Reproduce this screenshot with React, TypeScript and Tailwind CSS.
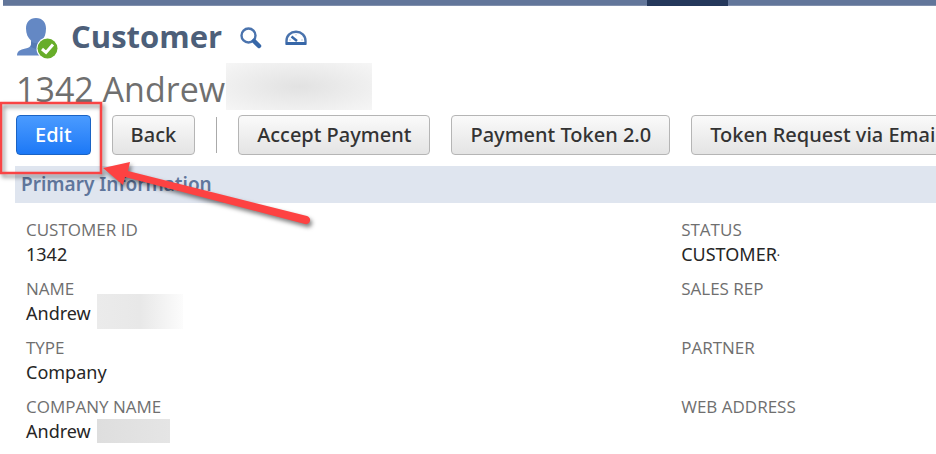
import React from 'react';
import clsx from 'clsx';

interface Field {
  label: string;
  value?: string;
  note?: string;
  mask?: string;
}

const LEFT_FIELDS: Field[] = [
  { label: 'CUSTOMER ID', value: '1342' },
  {
    label: 'NAME',
    value: 'Andrew',
    mask: 'ml-1.5 -mt-3 -mb-2 h-[35px] w-[86px] bg-linear-to-r from-[#ebebeb] via-[#e8e8e8] to-[#fcfcfc]',
  },
  { label: 'TYPE', value: 'Company' },
  {
    label: 'COMPANY NAME',
    value: 'Andrew',
    mask: 'ml-1.5 h-6 w-[73px] bg-linear-to-r from-[#dedede] to-[#e5e5e5]',
  },
];

const RIGHT_FIELDS: Field[] = [
  { label: 'STATUS', value: 'CUSTOMER', note: '·' },
  { label: 'SALES REP' },
  { label: 'PARTNER' },
  { label: 'WEB ADDRESS' },
];

const CustomerIcon = () => (
  <svg viewBox="0 0 42 42" className="h-[42px] w-[42px] shrink-0" aria-hidden="true">
    <path
      d="M19 0C12.500 0 9 4.500 9 10.500C9 16 11 20 14 22.500C14.500 26 14 29 10.500 30C5 31.500 0 32 0 37.500H32V30C28 30 24.500 28.500 24.500 25V22.500C27.500 20 29 16 29 10.500C29 4.500 25.500 0 19 0Z"
      fill="#6488c4"
    />
    <path d="M14 23C17 26 21 26 24.500 23V29L21 32L14 29Z" fill="#557ab5" />
    <circle cx="30.500" cy="30.500" r="11" fill="#fff" />
    <circle cx="30.500" cy="30.500" r="10" fill="#67ad29" />
    <path d="M25 31L29 34.500L36 26.500" fill="none" stroke="#fff" strokeWidth="3" />
  </svg>
);

const SearchIcon = () => (
  <svg viewBox="0 0 22 22" className="h-[22px] w-[22px]" aria-hidden="true">
    <circle cx="8.500" cy="8.500" r="7" fill="#fff" stroke="#4a73ad" strokeWidth="2.400" />
    <path d="M14 14L19 19" stroke="#3767a8" strokeWidth="4.500" strokeLinecap="round" />
  </svg>
);

const GaugeIcon = () => (
  <svg viewBox="0 0 22 16" className="h-4 w-[22px]" aria-hidden="true">
    <path
      d="M1.500 13.500V11C1.500 5.500 5.500 1.700 11 1.700S20.500 5.500 20.500 11V13.500Z"
      fill="#fff"
      stroke="#4a73ad"
      strokeWidth="2.400"
    />
    <path d="M1 13.500H21" stroke="#3767a8" strokeWidth="3" />
    <path d="M6.500 6.500L12 11" stroke="#3767a8" strokeWidth="2.400" />
    <path d="M4 10H6M16 10H18M11 4V5.500" stroke="#b4c6df" strokeWidth="1" />
  </svg>
);

const ActionButton = ({ children, primary }: { children: React.ReactNode; primary?: boolean }) => (
  <button
    type="button"
    className={clsx(
      "h-10 shrink-0 rounded border px-[18px] font-['Noto_Sans',sans-serif] text-xl font-medium whitespace-nowrap",
      primary
        ? 'border-[#1a63c4] bg-linear-to-b from-[#4a9bff] to-[#1b78f6] text-white'
        : 'border-[#b5b5b5] bg-linear-to-b from-[#fafafa] to-[#e4e4e4] text-[#333]'
    )}
  >
    {children}
  </button>
);

const FieldList = ({ fields }: { fields: Field[] }) => (
  <dl className="space-y-[11px]">
    {fields.map(({ label, value, note, mask }) => (
      <div key={label}>
        <dt className="text-[17px] leading-6 text-[#6f6f6f]">{label}</dt>
        <dd className="flex h-6 items-center font-['Noto_Sans',sans-serif] text-lg leading-6 text-[#262626]">
          {value}
          {note && <span className="pt-1 text-xs">{note}</span>}
          {mask && <span className={mask} />}
        </dd>
      </div>
    ))}
  </dl>
);

// Red frame around the Edit button with an arrow pointing at it
const Callout = () => (
  <svg
    viewBox="0 0 330 140"
    className="pointer-events-none absolute -top-5 -left-4 h-[140px] w-[330px] drop-shadow-[2px_3px_2px_rgba(0,0,0,0.5)]"
    aria-hidden="true"
  >
    <rect x="1" y="8" width="100" height="70" fill="none" stroke="#f94444" strokeWidth="2.500" />
    <path
      d="M103 73L130 67L128 76L307 121A4 4 0 0 1 305 129L125 82L123 90Z"
      fill="#fd4242"
    />
  </svg>
);

export default function App() {
  return (
    <main className="overflow-hidden bg-white font-['Open_Sans',sans-serif]">
      <div className="ml-[3px] flex h-1.5 border-b border-[#8190ad] bg-[#62769a]">
        <div className="ml-[69%] h-1.5 w-[81px] shrink-0 bg-[#24385b]" />
      </div>

      <header className="px-4">
        <div className="flex h-[57px] items-start pt-3 pl-px">
          <CustomerIcon />
          <h1 className="ml-3 text-[31px] leading-9 font-bold text-[#4d5f79]">Customer</h1>
          <div className="ml-[18px] flex h-10 items-center gap-[23px]">
            <button type="button" aria-label="Search">
              <SearchIcon />
            </button>
            <button type="button" aria-label="Dashboard">
              <GaugeIcon />
            </button>
          </div>
        </div>
        <div className="flex h-[47px] items-start">
          <h2 className="pt-[3px] text-[34px] leading-[47px] text-[#6f6f6f]">1342 Andrew</h2>
          <span className="ml-px h-[47px] w-[146px] bg-radial from-[#e2e2e2] to-[#f6f6f6]" />
        </div>
        <div className="relative mt-[5px] flex items-center gap-[21px]">
          <ActionButton primary>Edit</ActionButton>
          <ActionButton>Back</ActionButton>
          <span className="h-9 w-px shrink-0 bg-[#aaa]" />
          <ActionButton>Accept Payment</ActionButton>
          <ActionButton>Payment Token 2.0</ActionButton>
          <ActionButton>Token Request via Email</ActionButton>
          <Callout />
        </div>
      </header>

      <section>
        <h3 className="mt-[11px] ml-[15px] bg-[#dfe5ef] pl-1.5 font-['Noto_Sans',sans-serif] text-[19px] leading-[37px] font-semibold text-[#5f769c]">
          Primary Information
        </h3>
        <div className="mt-[15px] grid grid-cols-[18fr_7fr] pb-2 pl-[26px]">
          <FieldList fields={LEFT_FIELDS} />
          <FieldList fields={RIGHT_FIELDS} />
        </div>
      </section>
    </main>
  );
}
